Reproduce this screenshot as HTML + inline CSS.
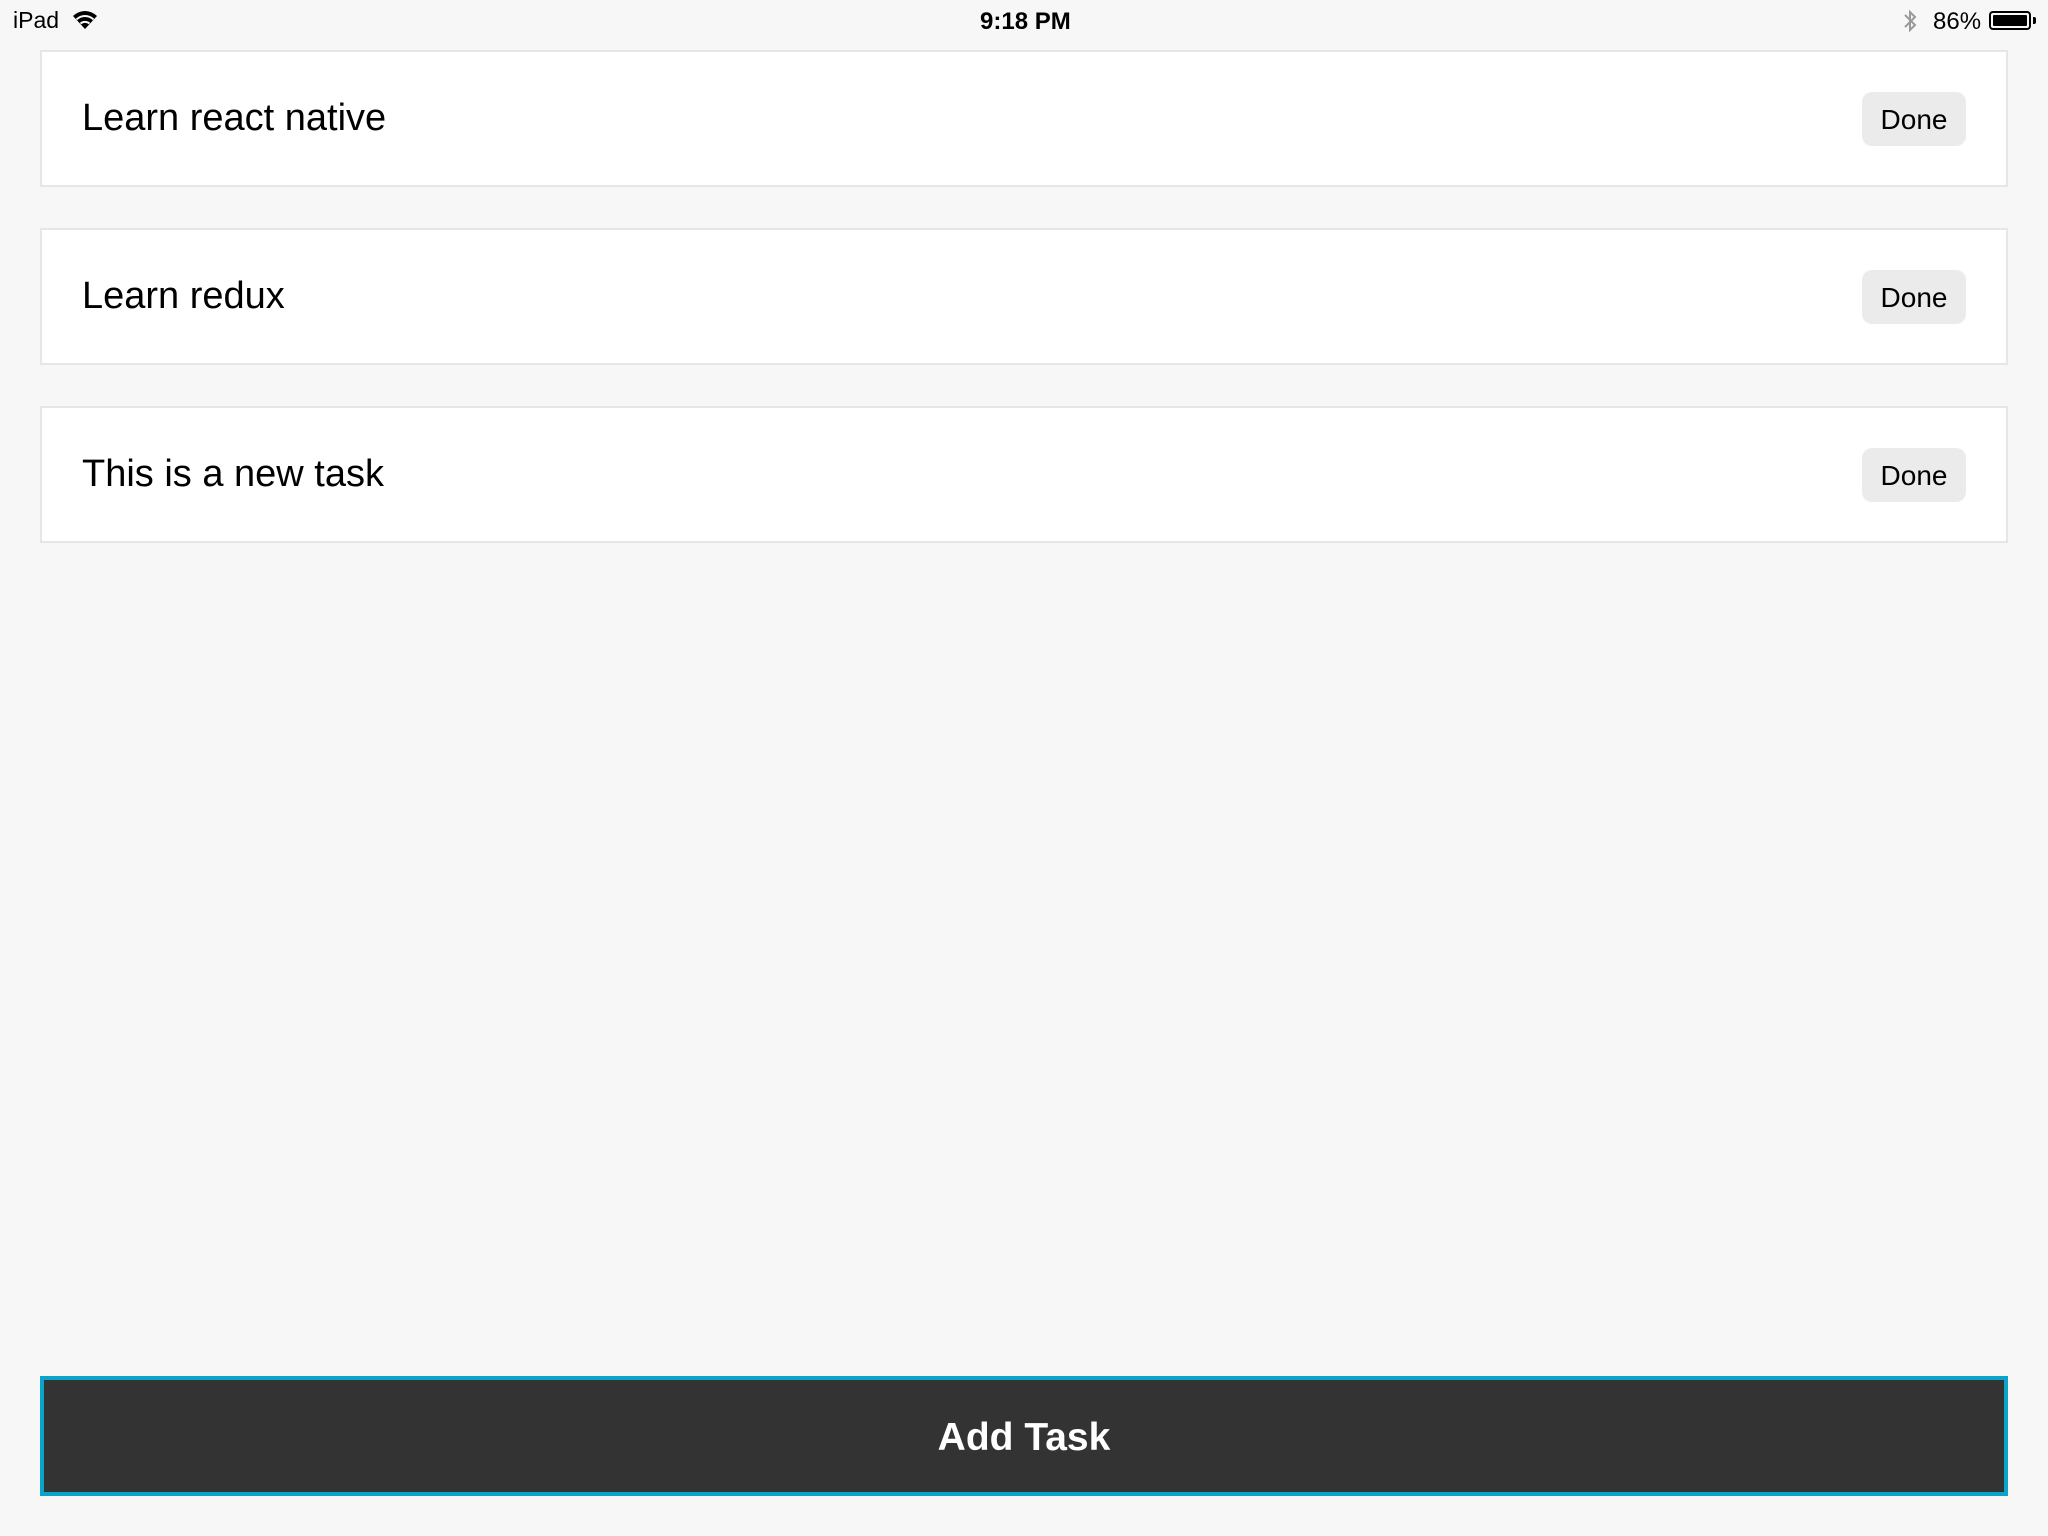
<!DOCTYPE html>
<html><head><meta charset="utf-8"><style>
*{margin:0;padding:0;box-sizing:border-box}
body{width:2048px;height:1536px;background:#f7f7f7;font-family:"Liberation Sans",sans-serif;position:relative;overflow:hidden;color:#000}
.sb{position:absolute;top:0;left:0;width:2048px;height:40px;font-size:23px}
.card{position:absolute;left:40px;width:1968px;height:137px;background:#fff;border:2px solid #e6e6e6}
.card .t{position:absolute;left:40px;top:0;line-height:133px;font-size:38px;letter-spacing:0}
.card .d{position:absolute;left:1820px;top:40px;width:104px;height:54px;background:#ebebeb;border-radius:10px;font-size:28px;line-height:56px;text-align:center}
.btn{position:absolute;left:40px;top:1376px;width:1968px;height:120px;background:#333;border:4px solid #0aa3c9;color:#fff;font-size:39px;font-weight:bold;text-align:center;line-height:116px}
</style></head><body>
<div class="sb">
<span style="position:absolute;left:13px;top:7px">iPad</span>
<svg style="position:absolute;left:72px;top:10px" width="26" height="20" viewBox="0 0 26 20"><path d="M13 19 L1 6 A17 17 0 0 1 25 6 Z" fill="#000"/><path d="M4.5 9.5 A12 12 0 0 1 21.5 9.5" stroke="#f7f7f7" stroke-width="2" fill="none"/><path d="M8.5 13.5 A7 7 0 0 1 17.5 13.5" stroke="#f7f7f7" stroke-width="2" fill="none"/></svg>
<span style="position:absolute;left:980px;top:8px;font-weight:bold;font-size:24px">9:18 PM</span>
<svg style="position:absolute;left:1903px;top:9px" width="14" height="24" viewBox="0 0 14 24"><path d="M2 6 L12 16 L7 21 L7 3 L12 8 L2 18" stroke="#999" stroke-width="2" fill="none"/></svg>
<span style="position:absolute;left:1933px;top:8px;font-size:24px">86%</span>
<div style="position:absolute;left:1989px;top:11px;width:42px;height:19px;border:2px solid #000;border-radius:4px;padding:2px"><div style="width:34px;height:11px;background:#000;border-radius:1px"></div></div>
<div style="position:absolute;left:2033px;top:17px;width:3px;height:7px;background:#000;border-radius:0 2px 2px 0"></div>
</div>
<div class="card" style="top:50px"><div class="t">Learn react native</div><div class="d">Done</div></div>
<div class="card" style="top:228px"><div class="t">Learn redux</div><div class="d">Done</div></div>
<div class="card" style="top:406px"><div class="t">This is a new task</div><div class="d">Done</div></div>
<div class="btn">Add Task</div>
</body></html>
